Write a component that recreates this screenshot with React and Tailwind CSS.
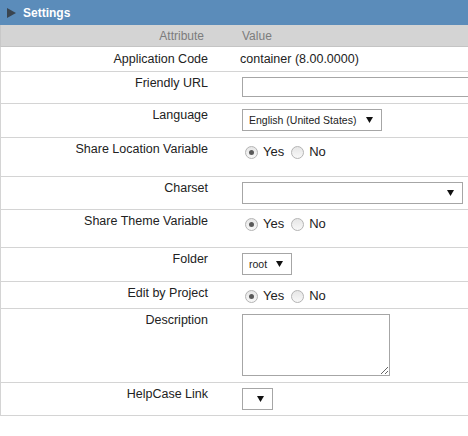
import { useState } from "react";

const rows = [
  { label: "Application Code", h: "h-[25px]", pt: "pt-[5px]", kind: "text", value: "container (8.00.0000)" },
  { label: "Friendly URL", h: "h-[32px]", kind: "input" },
  { label: "Language", h: "h-[34px]", kind: "language" },
  { label: "Share Location Variable", h: "h-[39px]", kind: "radio", name: "shareLocation" },
  { label: "Charset", h: "h-[33px]", kind: "charset" },
  { label: "Share Theme Variable", h: "h-[38px]", kind: "radio", name: "shareTheme" },
  { label: "Folder", h: "h-[34px]", kind: "folder" },
  { label: "Edit by Project", h: "h-[27px]", kind: "radio", name: "editByProject" },
  { label: "Description", h: "h-[74px]", kind: "textarea" },
  { label: "HelpCase Link", h: "h-[33px]", kind: "helpcase" },
];

// small black arrow used by the fake selects
function Arrow() {
  return (
    <svg width="7" height="6" viewBox="0 0 7 6" className="pointer-events-none absolute top-[8px] right-[9px]">
      <polygon points="0,0 7,0 3.5,6" fill="#111" />
    </svg>
  );
}

function Select({ width, children }) {
  return (
    <div className={`relative ${width} h-[22px]`}>
      <select className="block appearance-none w-full h-full border border-[#a6a6a6] bg-white pl-[6px] pr-5 text-[10.5px] leading-[14px] text-[#222] outline-none">
        {children}
      </select>
      <Arrow />
    </div>
  );
}

function Radio({ checked, onChange }) {
  return (
    <button
      type="button"
      onClick={onChange}
      className="w-[13px] h-[13px] rounded-full border border-[#b4b4b4] bg-gradient-to-b from-[#e6e6e6] to-[#f8f8f8] flex items-center justify-center"
    >
      {checked && <span className="w-[5px] h-[5px] rounded-full bg-[#5a5a5a]" />}
    </button>
  );
}

function YesNo() {
  const [yes, setYes] = useState(true);
  return (
    <div className="flex items-center h-[18px] text-[13px] text-[#222]">
      <span className="ml-[3px]">
        <Radio checked={yes} onChange={() => setYes(true)} />
      </span>
      <span className="ml-[5px]">Yes</span>
      <span className="ml-[7px]">
        <Radio checked={!yes} onChange={() => setYes(false)} />
      </span>
      <span className="ml-[5px]">No</span>
    </div>
  );
}

function ValueCell({ row }) {
  switch (row.kind) {
    case "text":
      return <div className="text-[12.5px] leading-[15px] text-[#222] -ml-[2px]">{row.value}</div>;
    case "input":
      return <input className="block w-[240px] h-[20px] border border-[#a6a6a6] bg-white outline-none" />;
    case "language":
      return (
        <Select width="w-[140px]">
          <option>English (United States)</option>
        </Select>
      );
    case "radio":
      return <YesNo />;
    case "charset":
      return (
        <Select width="w-[221px]">
          <option></option>
        </Select>
      );
    case "folder":
      return (
        <Select width="w-[50px]">
          <option>root</option>
        </Select>
      );
    case "textarea":
      return <textarea className="block w-[148px] h-[62px] border border-[#a6a6a6] bg-white outline-none" />;
    case "helpcase":
      return (
        <Select width="w-[31px]">
          <option></option>
        </Select>
      );
    default:
      return null;
  }
}

export default function App() {
  return (
    <div className="w-full overflow-hidden bg-white font-['Liberation_Sans',Arial,sans-serif]">
      <div className="w-[490px]">
        {/* Title bar */}
        <div className="h-[25px] bg-[#5b8cba] flex items-center">
          <svg width="9" height="10" viewBox="0 0 9 10" className="ml-[7px]">
            <polygon points="0,0 9,5 0,10" fill="#3a4550" />
          </svg>
          <span className="ml-[7px] text-[12px] font-bold text-white">Settings</span>
        </div>

        {/* Column headers */}
        <div className="grid grid-cols-[233px_1fr] h-[22px] bg-[#d4d4d4] border-b border-[#c4c4c4] border-l border-l-[#c8c8c8] text-[12px] text-[#7c7c7c] items-center">
          <div className="text-right pr-[30px]">Attribute</div>
          <div className="pl-[8px]">Value</div>
        </div>

        {/* Rows */}
        {rows.map((row) => (
          <div
            key={row.label}
            className={`grid grid-cols-[233px_1fr] ${row.h} border-b border-[#d4d4d4] border-l border-l-[#d4d4d4]`}
          >
            <div className={`text-right pr-[26px] text-[12.5px] leading-[15px] text-[#222] ${row.pt || "pt-[4px]"}`}>
              {row.label}
            </div>
            <div className={`pl-[8px] ${row.pt || "pt-[5px]"}`}>
              <ValueCell row={row} />
            </div>
          </div>
        ))}
      </div>
    </div>
  );
}
